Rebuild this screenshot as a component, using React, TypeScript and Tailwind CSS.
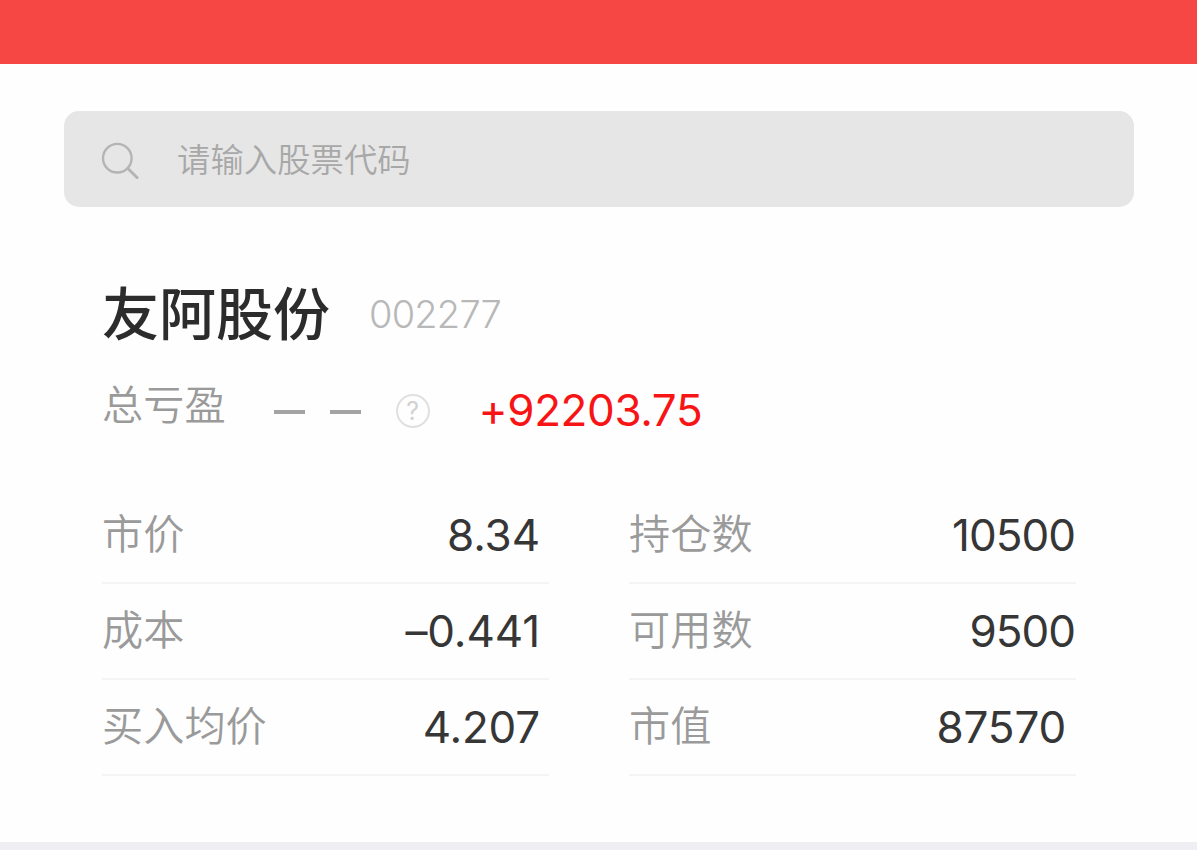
type Metric = { label: string; value: string; pad: string; track: string };

const left: Metric[] = [
  { label: "市价", value: "8.34", pad: "pr-[9px]", track: "tracking-[-0.1px]" },
  { label: "成本", value: "–0.441", pad: "pr-[9px]", track: "tracking-[-0.1px]" },
  { label: "买入均价", value: "4.207", pad: "pr-[9px]", track: "tracking-[-0.2px]" },
];

const right: Metric[] = [
  { label: "持仓数", value: "10500", pad: "pr-px", track: "tracking-[-1px]" },
  { label: "可用数", value: "9500", pad: "pr-px", track: "tracking-[-1px]" },
  { label: "市值", value: "87570", pad: "pr-[10px]", track: "tracking-[-0.2px]" },
];

function Column({ items }: { items: Metric[] }) {
  return (
    <dl className="w-[447px]">
      {items.map((m) => (
        <div key={m.label} className="flex h-24 items-center justify-between border-b-2 border-[#f4f4f4]">
          <dt className="pb-[9px] text-[41.2px] leading-[50px] font-[350] text-[#9a9a9a]">{m.label}</dt>
          <dd className={`font-['Inter',sans-serif] text-[44px] leading-[50px] font-normal text-[#363636] ${m.pad} ${m.track}`}>
            {m.value}
          </dd>
        </div>
      ))}
    </dl>
  );
}

export default function App() {
  return (
    <div className="flex h-[850px] w-[1197px] flex-col overflow-hidden bg-[#fefefe] font-['Noto_Sans_CJK_SC',sans-serif]">
      <header className="h-16 shrink-0 bg-[#f64744]" />
      <main className="flex grow flex-col">
        <div className="mx-16 mt-[47px] flex h-24 w-[1070px] items-center rounded-[15px] bg-[#e6e6e6] pl-9">
          <svg className="size-10" viewBox="0 0 40 40" fill="none" stroke="#b4b4b4" strokeWidth="2.4">
            <circle cx="17.3" cy="19.2" r="14.3" />
            <path d="M27.6 29.3 L38 39.6" strokeWidth="2.8" />
          </svg>
          <span className="ml-[37px] pb-[2px] text-[33.4px] leading-[44px] font-[350] text-[#a8a8a8]">请输入股票代码</span>
        </div>

        <div className="mt-[70px] ml-[102px] flex h-[72px] items-center">
          <h1 className="pb-[7px] text-[57px] leading-[72px] font-medium text-[#2c2c2c]">友阿股份</h1>
          <span className="ml-[39px] pt-px font-['Inter',sans-serif] text-[38px] leading-[48px] font-[350] tracking-[-0.8px] text-[#b8b8b8]">
            002277
          </span>
        </div>

        <div className="mt-7 ml-[102px] flex h-[66px] items-center">
          <span className="pb-[17px] text-[41.2px] leading-[50px] font-[350] text-[#9a9a9a]">总亏盈</span>
          <span className="mt-[3px] ml-12 flex gap-[25px]">
            <i className="h-1 w-[31px] bg-[#a3a3a3]" />
            <i className="h-1 w-[31px] bg-[#a3a3a3]" />
          </span>
          <span className="mt-[2px] ml-[35px] flex size-[34px] items-center justify-center rounded-full border-2 border-[#e0e0e0] font-['Inter',sans-serif] text-[25px] leading-[30px] text-[#d2d2d2]">
            ?
          </span>
          <span className="ml-[49px] font-['Inter',sans-serif] text-[44px] leading-[50px] font-normal tracking-[-0.4px] text-[#f81414]">
            +92203.75
          </span>
        </div>

        <div className="mt-[45px] ml-[102px] flex gap-20">
          <Column items={left} />
          <Column items={right} />
        </div>
        <div className="mt-auto h-2 bg-[#eeeef3]" />
      </main>
    </div>
  );
}
